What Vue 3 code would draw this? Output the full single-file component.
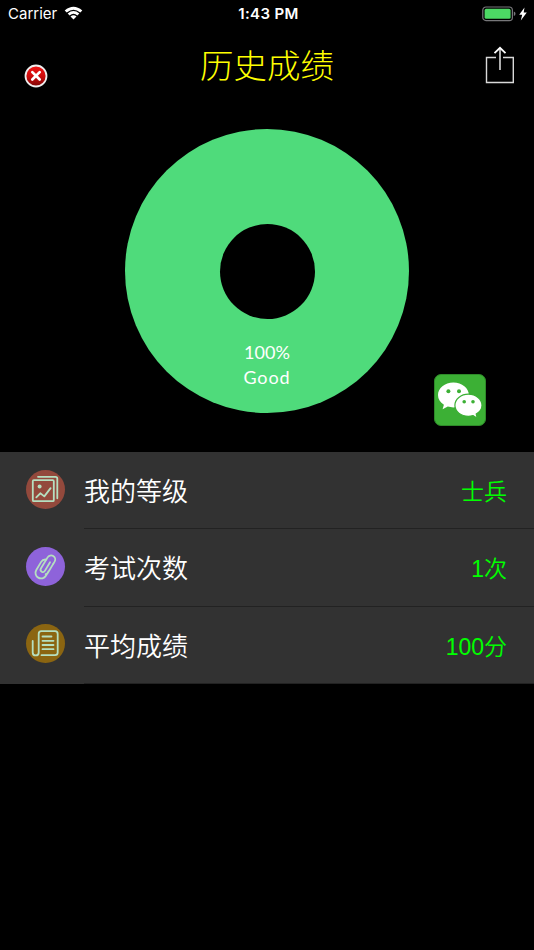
<template>
    <main class="screen">
        <div class="status">
            <div class="status__carrier">
                <span>Carrier</span>
                <svg class="status__wifi" viewBox="0 0 18 14" aria-hidden="true">
                    <path d="M.2 4.5Q9-3 17.8 4.5L15.8 6.5Q9 .8 2.2 6.5Z" />
                    <path d="M3.2 7.5Q9 2.7 14.8 7.5L12.9 9.4Q9 6.1 5.1 9.4Z" />
                    <path d="M6 10.4Q9 7.9 12 10.4L9 13.4Z" />
                </svg>
            </div>
            <time class="status__time">1:43 PM</time>
            <div class="status__power">
                <svg class="status__battery" viewBox="0 0 34 16" aria-hidden="true">
                    <rect x=".8" y="1" width="29.6" height="13.6" rx="3.2" fill="none" stroke="#77777a" stroke-width="1.2" />
                    <rect x="2.6" y="2.8" width="26" height="10" rx="1.6" fill="#4cd964" />
                    <path d="M31.8 5.5Q33.5 6 33.5 7.8Q33.5 9.6 31.8 10.1Z" fill="#77777a" />
                </svg>
                <svg class="status__bolt" viewBox="0 0 8 14" aria-hidden="true">
                    <path d="M5.5.4.2 7.8h3L1.8 13.6 7.8 5.5H4.7Z" fill="#fff" />
                </svg>
            </div>
        </div>

        <header class="nav">
            <button type="button" class="nav__close" aria-label="关闭">
                <svg viewBox="0 0 24 24">
                    <defs>
                        <linearGradient id="close-red" x1="0" y1="0" x2="0" y2="1">
                            <stop offset="0" stop-color="#ef1515" />
                            <stop offset=".5" stop-color="#cf0c0c" />
                            <stop offset="1" stop-color="#7d0505" />
                        </linearGradient>
                    </defs>
                    <circle cx="12" cy="12" r="10.5" fill="url(#close-red)" stroke="#eee" stroke-width="1.8" />
                    <path d="m8.3 8.1 7.4 7.4m0-7.4-7.4 7.4" stroke="#fff" stroke-width="2.7" stroke-linecap="round" />
                </svg>
            </button>
            <h1 class="nav__title">历史成绩</h1>
            <button type="button" class="nav__share" aria-label="分享">
                <svg viewBox="0 0 30 38" fill="none" stroke="#fff">
                    <path d="M11 11.5H1.5V36.5H28.3V11.5H18" stroke-width="1.4" opacity=".85" />
                    <path d="M15 24V2" stroke-width="1.6" opacity=".85" />
                    <path d="M9.5 7.2 15 1.8 20.5 7.2" stroke-width="1.8" />
                </svg>
            </button>
        </header>

        <section class="stage">
            <div class="donut">
                <div class="donut__hole" />
                <p class="donut__label">100%<br><span class="donut__grade">Good</span></p>
            </div>
            <button type="button" class="wechat" aria-label="微信">
                <svg viewBox="0 0 52 52">
                    <rect x=".5" y=".5" width="51" height="51" rx="6.5" fill="#3cb035" stroke="#2e8a29" />
                    <path fill="#fff" d="M19.4 8.6C10.7 8.6 4 14.2 4 21.1c0 4 2.2 7.4 5.9 9.7L8.6 35.3l5.2-2.7c1.8.5 3.6.8 5.6.8 8.6 0 15.5-5.4 15.5-12.3S28 8.6 19.4 8.6Z" />
                    <path fill="#fff" stroke="#3cb035" stroke-width="1.2" d="M34.4 20.2c-7.5 0-13.5 4.9-13.5 11.1s6 11 13.5 11c1.7 0 3.2-.3 4.7-.7l4.2 2.7-1.1-4.2c3.6-2 5.8-5.1 5.8-8.8 0-6.2-6.1-11.1-13.6-11.1Z" />
                    <g fill="#3cb035">
                        <circle cx="14.4" cy="17.2" r="2" />
                        <circle cx="25" cy="17.2" r="2" />
                        <circle cx="30.2" cy="27.7" r="1.8" />
                        <circle cx="39" cy="27.7" r="1.8" />
                    </g>
                </svg>
            </button>
        </section>

        <ul class="list">
            <li v-for="row in rows" :key="row.label" class="row">
                <span class="row__icon" :class="`row__icon--${row.icon}`">
                    <svg v-if="row.icon === 'photo'" viewBox="0 0 39 39">
                        <rect x="6.8" y="10.2" width="21" height="21" rx="1" />
                        <path d="M12 6.8H29.5Q31.3 6.8 31.3 8.6V28.3" />
                        <circle class="dot" cx="13.6" cy="16.4" r="2" />
                        <path d="m10.3 27.4 4-4.1 4 3.1 6.3-8.3" />
                    </svg>
                    <svg v-else-if="row.icon === 'clip'" viewBox="0 0 39 39">
                        <g transform="rotate(31 19.5 19.5)">
                            <path d="M24.8 13V10.6a4.1 4.1 0 0 0-8.2 0V23.6a2.3 2.3 0 0 0 4.6 0V13.5" />
                            <path d="M24.8 13V24a5.3 5.3 0 0 1-1.2 2M16.6 13.2a5 5 0 0 0-3.2 4.6V27.2a5.6 5.6 0 0 0 11.2 0V22" />
                        </g>
                    </svg>
                    <svg v-else viewBox="0 0 39 39">
                        <path d="M15.5 31.2H29Q31.7 31.2 31.7 28.5V10Q31.7 7.2 29 7.2H15.4Q12.7 7.2 12.7 10V28.4Q12.7 31.4 9.7 31.4T6.7 28.4V17" />
                        <path d="M16.5 12.5h9M16.5 16.8h11M16.5 21h11M16.5 25.2h11" />
                    </svg>
                </span>
                <div class="row__body">
                    <span class="row__label">{{ row.label }}</span>
                    <span class="row__value">{{ row.value }}</span>
                </div>
            </li>
        </ul>
    </main>
</template>

<script setup>
const rows = [
    { icon: 'photo', label: '我的等级', value: '士兵' },
    { icon: 'clip', label: '考试次数', value: '1次' },
    { icon: 'news', label: '平均成绩', value: '100分' },
]
</script>

<style>
body {
    margin: 0;
    background: #000;
}
</style>

<style scoped>
.screen {
    width: 534px;
    height: 950px;
    overflow: hidden;
    background: #000;
    color: #fff;
    font-family: Inter, 'Noto Sans CJK SC', sans-serif;
}

button {
    padding: 0;
    border: 0;
    background: none;
}

svg {
    display: block;
    width: 100%;
    height: 100%;
}

.status {
    display: grid;
    grid-template-columns: 1fr auto 1fr;
    align-items: center;
    height: 27px;
    padding: 0 6px 0 8px;
    font-size: 15.5px;
}

.status__carrier {
    display: flex;
    align-items: center;
    gap: 7px;
    font-size: 15px;
    letter-spacing: 0;
}

.status__wifi {
    width: 19px;
    height: 14px;
    margin-top: -1px;
    fill: #fff;
}

.status__time {
    padding-left: 1px;
    font-size: 15px;
    font-weight: 600;
    letter-spacing: 0.35px;
}

.status__power {
    display: flex;
    align-items: center;
    justify-content: flex-end;
    gap: 3px;
    margin-right: 1px;
}

.status__battery {
    width: 34px;
    height: 16px;
}

.status__bolt {
    width: 8px;
    height: 14px;
}

.nav {
    display: grid;
    grid-template-columns: 1fr auto 1fr;
    height: 102px;
    padding: 1px 19px 0 24px;
    box-sizing: border-box;
}

.nav__close {
    width: 24px;
    height: 24px;
    margin-top: 36px;
}

.nav__title {
    margin: 11px 5px 0 0;
    color: #ff0;
    font-family: 'Noto Sans CJK SC', sans-serif;
    font-size: 33.5px;
    font-weight: 300;
    line-height: 50px;
}

.nav__share {
    justify-self: end;
    width: 30px;
    height: 38px;
    margin-top: 18px;
}

.stage {
    display: grid;
    grid-template-columns: 1fr 284px 1fr;
    height: 323px;
}

.donut {
    display: flex;
    grid-column: 2;
    flex-direction: column;
    align-items: center;
    width: 284px;
    height: 284px;
    border-radius: 50%;
    background: #4fdb7b;
}

.donut__hole {
    width: 95px;
    height: 95px;
    margin-top: 94.5px;
    border-radius: 50%;
    background: #000;
}

.donut__label {
    margin: 21.5px 0 0;
    font-family: Lato, sans-serif;
    font-size: 18px;
    line-height: 25px;
    text-align: center;
}

.donut__grade {
    letter-spacing: 0.9px;
}

.wechat {
    align-self: end;
    width: 52px;
    height: 52px;
    margin: 0 0 26px 25px;
}

.list {
    margin: 0;
    padding: 0;
    background: #323232;
    list-style: none;
}

.row {
    display: flex;
    align-items: center;
    height: 77.33px;
    padding-left: 26px;
    font-family: 'Noto Sans CJK SC', sans-serif;
}

.row__icon {
    width: 39px;
    height: 39px;
    margin: 0 19px 3px 0;
    border-radius: 50%;
    fill: none;
    stroke: #b5dfc0;
    stroke-width: 1.8;
    stroke-linecap: round;
    stroke-linejoin: round;
}

.row__icon--photo {
    background: #93493c;
}

.row__icon--clip {
    background: #8e63da;
}

.row__icon--news {
    background: #8b6511;
}

.dot {
    fill: #b5dfc0;
    stroke: none;
}

.row__body {
    display: flex;
    flex: 1;
    align-items: center;
    justify-content: space-between;
    height: 100%;
    padding-right: 27px;
    border-bottom: 1px solid #222;
    box-sizing: border-box;
}

.row__label,
.row__value {
    line-height: 38px;
}

.row__label {
    font-size: 26px;
    font-weight: 350;
}

.row__value {
    padding-top: 4px;
    color: #0f0;
    font-family: 'Liberation Sans', 'Noto Sans CJK SC', sans-serif;
    font-size: 23px;
    font-weight: 350;
}
</style>
